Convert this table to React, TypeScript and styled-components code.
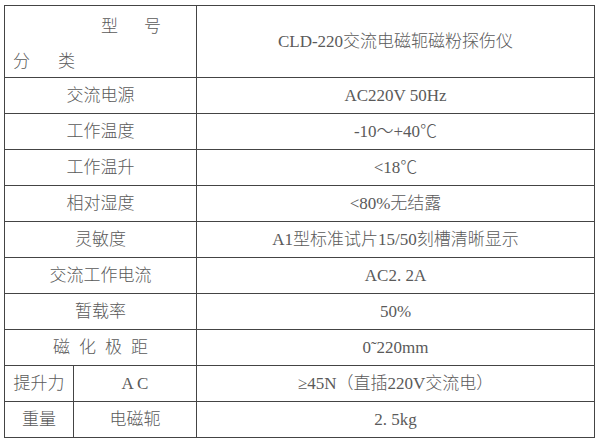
import styled, { createGlobalStyle } from 'styled-components';

const GlobalStyle = createGlobalStyle`
  html, body {
    margin: 0;
    padding: 0;
    background: #fff;
  }
  body {
    font-family: "Liberation Serif", "Noto Sans CJK SC", serif;
  }
`;

type SpecRow = {
  label: string;
  value: string;
  spread?: boolean;
};

const rows: SpecRow[] = [
  { label: '交流电源', value: 'AC220V 50Hz' },
  { label: '工作温度', value: '-10～+40℃' },
  { label: '工作温升', value: '<18℃' },
  { label: '相对湿度', value: '<80%无结露' },
  { label: '灵敏度', value: 'A1型标准试片15/50刻槽清晰显示' },
  { label: '交流工作电流', value: 'AC2. 2A' },
  { label: '暂载率', value: '50%' },
  { label: '磁化极距', value: '0˜220mm', spread: true },
];

const App = () => {
  return (
    <Page>
      <GlobalStyle />
      <SpecTable>
        <colgroup>
          <col style={{ width: 69 }} />
          <col style={{ width: 123 }} />
          <col />
        </colgroup>
        <tbody>
          <Row $tall>
            <HeadCell colSpan={2}>
              <HeadLine $indent={96}>
                <span>型</span>
                <HeadGap $w={26} />
                <span>号</span>
              </HeadLine>
              <HeadLine $indent={8}>
                <span>分</span>
                <HeadGap $w={28} />
                <span>类</span>
              </HeadLine>
            </HeadCell>
            <Cell>CLD-220交流电磁轭磁粉探伤仪</Cell>
          </Row>
          {rows.map((r) => (
            <Row key={r.label}>
              <Cell colSpan={2} $spread={r.spread}>{r.label}</Cell>
              <Cell>{r.value}</Cell>
            </Row>
          ))}
          <Row>
            <Cell>提升力</Cell>
            <Cell>A C</Cell>
            <Cell>≥45N（直插220V交流电）</Cell>
          </Row>
          <Row>
            <Cell>重量</Cell>
            <Cell>电磁轭</Cell>
            <Cell>2. 5kg</Cell>
          </Row>
        </tbody>
      </SpecTable>
    </Page>
  );
};

const Page = styled.div`
  width: 600px;
  height: 445px;
  padding: 5px 0 0 4px;
  box-sizing: border-box;
`;

const SpecTable = styled.table`
  width: 591px;
  border-collapse: collapse;
  table-layout: fixed;
  border: 1.5px solid #3a3a3a;
  border-top-color: #777;
  border-bottom-color: #777;
`;

const Row = styled.tr<{ $tall?: boolean }>`
  height: ${(p) => (p.$tall ? 72 : 36)}px;
`;

const Cell = styled.td<{ $spread?: boolean }>`
  border: 1px solid #444;
  padding: 0;
  line-height: 20px;
  text-align: center;
  vertical-align: middle;
  font-size: 17px;
  font-weight: 300;
  color: #5a5a5a;
  white-space: nowrap;
  letter-spacing: ${(p) => (p.$spread ? '9px' : '0')};
  text-indent: ${(p) => (p.$spread ? '9px' : '0')};
`;

const HeadCell = styled.td`
  border: 1px solid #444;
  padding: 3px 0 0;
  vertical-align: top;
  font-size: 17px;
  font-weight: 300;
  color: #5a5a5a;
`;

const HeadLine = styled.div<{ $indent: number }>`
  display: flex;
  align-items: center;
  height: 30px;
  padding-left: ${(p) => p.$indent}px;
  & + & {
    margin-top: 5px;
  }
`;

const HeadGap = styled.span<{ $w: number }>`
  display: inline-block;
  width: ${(p) => p.$w}px;
`;

export default App;
